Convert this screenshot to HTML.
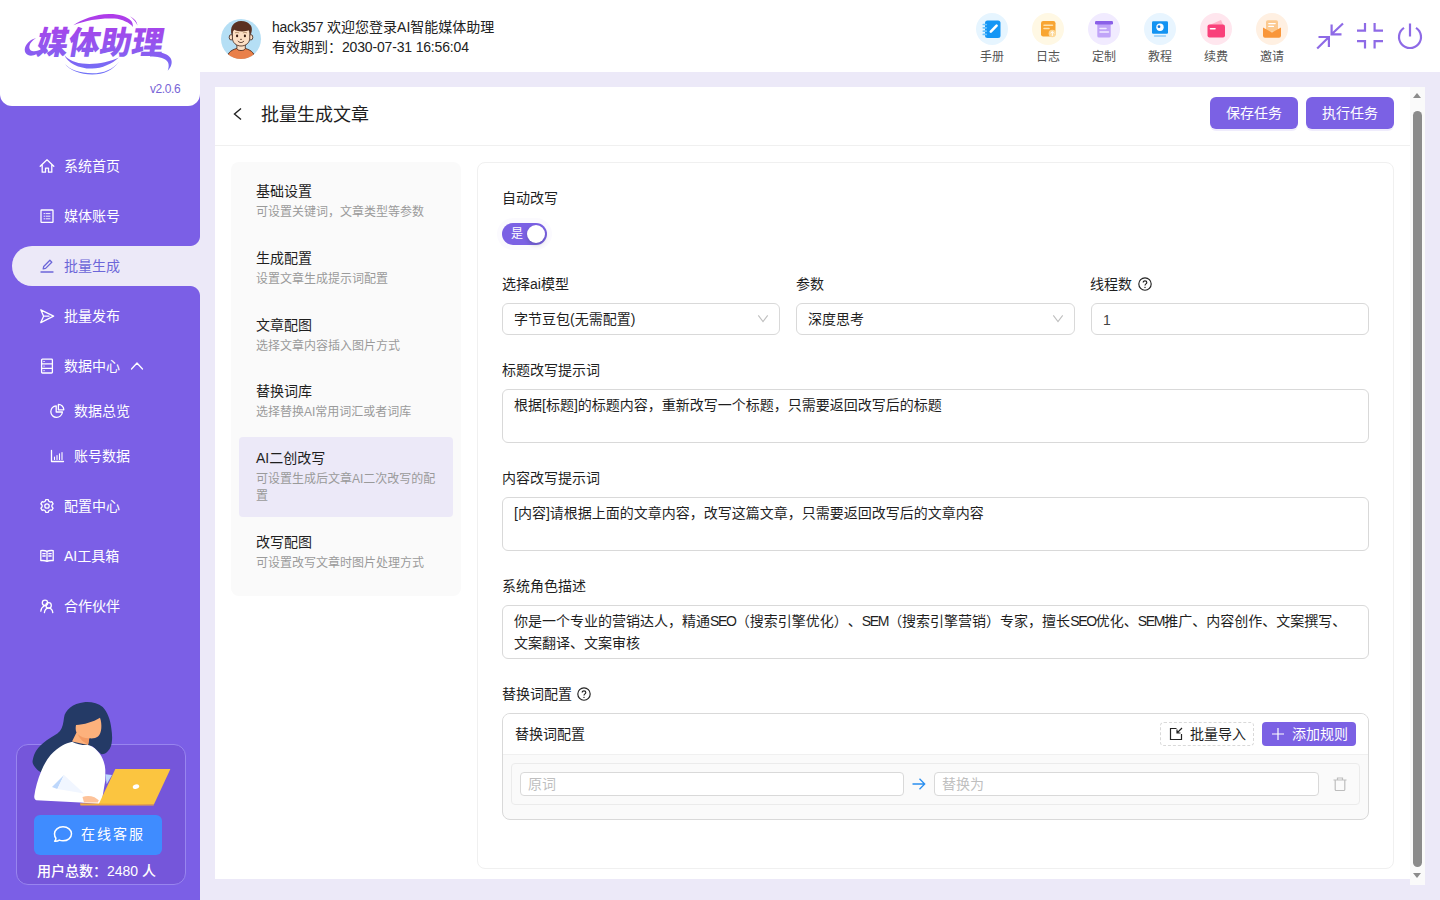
<!DOCTYPE html>
<html lang="zh-CN">
<head>
<meta charset="utf-8">
<title>批量生成文章</title>
<style>
*{box-sizing:border-box;margin:0;padding:0}
html,body{width:1440px;height:900px;overflow:hidden}
body{text-spacing-trim:space-all;font-family:"Liberation Sans","Noto Sans CJK SC",sans-serif;font-size:14px;color:#222;background:#ece9f8;position:relative}
.abs{position:absolute}
/* ---------- sidebar ---------- */
#side{position:absolute;left:0;top:0;width:200px;height:900px;background:#7b5fe6}
#logo{position:absolute;left:0;top:0;width:200px;height:106px;background:#fff;border-radius:0 0 12px 12px}
#ver{position:absolute;left:150px;top:82px;font-size:12px;letter-spacing:-.4px;color:#7763d6;line-height:14px}
.mi{position:absolute;left:0;width:200px;height:40px;color:#fff;font-size:14px;line-height:40px}
.mi svg{position:absolute;top:12px;width:16px;height:16px;fill:none;stroke:#fff;stroke-width:1.3;stroke-linecap:round;stroke-linejoin:round}
.mi span{position:absolute;top:0;white-space:nowrap}
.mi.l1 svg{left:39px}.mi.l1 span{left:64px}
.mi.l2 svg{left:49px;width:16px;height:16px;top:12px}.mi.l2 span{left:74px}
#act{position:absolute;left:12px;top:246px;width:188px;height:40px;background:#ece9f8;border-radius:20px 0 0 20px}
#act:before,#act:after{content:"";position:absolute;right:0;width:10px;height:10px}
#act:before{top:-10px;background:radial-gradient(circle at 0 0,#7b5fe6 9.5px,#ece9f8 10.5px)}
#act:after{bottom:-10px;background:radial-gradient(circle at 0 100%,#7b5fe6 9.5px,#ece9f8 10.5px)}
.mi.on{color:#6c66d9}.mi.on svg{stroke:#6c66d9}
#svc{position:absolute;left:16px;top:744px;width:170px;height:141px;background:#7556da;border:1px solid #9885ef;border-radius:12px}
#svcbtn{position:absolute;left:34px;top:815px;width:128px;height:40px;background:#3f8cff;border-radius:6px;color:#fff;font-size:14px;line-height:40px}
#svcbtn span{position:absolute;left:47px;top:-1px;letter-spacing:2px}
#users{position:absolute;left:12px;top:861px;width:169px;text-align:center;color:#fff;font-size:14px;font-weight:500;line-height:20px;white-space:nowrap}
/* ---------- header ---------- */
#hdr{position:absolute;left:200px;top:0;width:1240px;height:72px;background:#fff}
.hl{position:absolute;left:72px;font-size:14px;line-height:20px;color:#222;white-space:nowrap}
.ti{position:absolute;top:13px;width:56px;text-align:center}
.ti i{display:block;width:32px;height:32px;border-radius:50%;margin:0 auto}
.ti b{display:block;font-weight:400;font-size:12px;line-height:16px;color:#555;margin-top:4px}
/* ---------- card ---------- */
#card{position:absolute;left:215px;top:87px;width:1195px;height:792px;background:#fff}
#sb{position:absolute;left:1410px;top:87px;width:15px;height:798px;background:#fafafa}
#sb .th{position:absolute;left:3px;top:24px;width:9px;height:756px;border-radius:5px;background:#8b8b8b}
#sb .up{position:absolute;left:3px;top:6px;border:4.5px solid transparent;border-bottom:5px solid #8b8b8b;border-top:0}
#sb .dn{position:absolute;left:3px;top:786px;border:4.5px solid transparent;border-top:5px solid #8b8b8b;border-bottom:0}

/* ---------- card inner ---------- */
#ptitle{position:absolute;left:46px;top:15px;font-size:18px;line-height:26px;color:#1f1f1f;white-space:nowrap}
#phr{position:absolute;left:0;top:58px;width:1195px;height:1px;background:#f0f0f0}
.pbtn{position:absolute;top:10px;width:88px;height:32px;border-radius:6px;background:#7b61e4;color:#fff;font-size:14px;line-height:32px;text-align:center;box-shadow:0 2px 0 rgba(123,97,228,.12)}
#steps{position:absolute;left:16px;top:75px;width:230px;height:434px;background:#fafafa;border-radius:8px}
.st{position:absolute;left:8px;width:214px;border-radius:4px}
.st h4{position:absolute;left:17px;font-weight:400;font-size:14px;line-height:20px;color:#1f1f1f;white-space:nowrap}
.st p{position:absolute;left:17px;width:184px;font-size:12px;line-height:17px;color:#9a9a9a}
#form{position:absolute;left:262px;top:75px;width:917px;height:707px;border:1px solid #f0f0f0;border-radius:8px;background:#fff}
.lb{position:absolute;font-size:14px;line-height:20px;color:#1f1f1f;white-space:nowrap}
.ip{position:absolute;border:1px solid #d9d9d9;border-radius:6px;background:#fff;font-size:14px;line-height:20px;color:#1f1f1f;padding:5px 11px}
.ip u{text-decoration:none;letter-spacing:-1.3px}
.q{position:absolute;width:14px;height:14px}
#sw{position:absolute;left:24px;top:60px;width:45px;height:22px;border-radius:11px;background:#7b61e4;box-shadow:0 0 0 5px rgba(123,97,228,.03);color:#fff;font-size:12px;line-height:22px}
#sw span{position:absolute;left:9px;top:1px;line-height:21px}
#sw i{position:absolute;right:2px;top:2px;width:18px;height:18px;border-radius:50%;background:#fff;box-shadow:0 2px 4px rgba(0,35,11,.2)}
#rc{position:absolute;left:24px;top:550px;width:867px;height:107px;border:1px solid #d9d9d9;border-radius:8px;background:#fafafa;overflow:hidden}
#rch{position:absolute;left:0;top:0;width:865px;height:41px;background:#fff;border-bottom:1px solid #f0f0f0}
#rch b{position:absolute;left:12px;top:10px;font-weight:400;font-size:14px;line-height:20px;color:#1f1f1f}
.sbtn{position:absolute;top:8px;height:24px;border-radius:4px;font-size:14px;line-height:22px;white-space:nowrap}
#row{position:absolute;left:8px;top:49px;width:849px;height:42px;border:1px solid #ebebeb;border-radius:4px;background:#fafafa}
.si{position:absolute;top:8px;height:24px;border:1px solid #d9d9d9;border-radius:4px;background:#fff;font-size:14px;line-height:22px;color:#bfbfbf;padding:0 7px}
</style>
</head>
<body>
<div id="side">
  <div id="logo"><svg width="200" height="105" viewBox="0 0 200 105">
    <defs>
    <linearGradient id="lg2" x1="0" y1="14" x2="0" y2="74" gradientUnits="userSpaceOnUse"><stop offset="0" stop-color="#b13ae9"/><stop offset=".5" stop-color="#9455ee"/><stop offset="1" stop-color="#6f72f8"/></linearGradient>
    <linearGradient id="lg3" x1="0" y1="-39" x2="0" y2="21" gradientUnits="userSpaceOnUse"><stop offset="0" stop-color="#b13ae9"/><stop offset=".5" stop-color="#9455ee"/><stop offset="1" stop-color="#6f72f8"/></linearGradient></defs>
    <g fill="url(#lg2)">
      <path d="M73.300 25.200C82 19.500 95 14.500 108.900 14.100c9.100-.2 18.100 2.400 22.200 6.700 1.400 1.700 1.900 3.700 1.700 6.100-2.800-3.900-10.800-7.700-18.400-8.300-11.400-.8-26.400.9-41.100 6.600z"/>
      <path d="M130 16.300c4.500 2.300 7 5.500 7.500 9.200-1.500-3.500-4-6.300-7.500-9.200z"/>
      <path d="M64.400 54.700C66 58 72 62 82.200 63.600c12.800 1.400 25.800-1.100 36.700-6.100-6.900 6.500-16.900 10.800-26.700 11.100C80 69 67 63 64.400 54.700z"/>
      <path d="M65 64.100c5 5.900 15 8.900 27.200 9.200 11.800 0 20.800-4.300 26.700-11.400-5.900 8.100-14.900 12.400-26.700 12.600-12.200 0-22.700-4-27.200-10.400z"/>
      <path d="M42 48.500c-4 6-10 8.500-14 6.500-4.500-2.200-4.200-8 .2-12.500 2.500-2.500 5.300-3.900 7.800-4.200-3.500 2-5.800 4.500-6.500 7.500-.7 3 .8 5.300 3.800 5.500 3 .2 6.200-1 8.700-2.800z"/>
      <path d="M150 52.500c9-1.200 17.500.5 20.500 5.500 2.500 4.200.8 9-2.800 12.800 1.500-4 1.500-7.800-1.200-10.300-3-2.800-9-4-16.500-4z"/>
    </g>
    <text transform="translate(35 54) skewX(-10)" font-family="'Liberation Sans','Noto Sans CJK SC',sans-serif" font-weight="900" font-size="32" textLength="127" lengthAdjust="spacingAndGlyphs" fill="url(#lg3)">媒体助理</text>
  </svg></div>
  <div id="ver">v2.0.6</div>
  <div id="act"></div>

  <div class="mi l1" style="top:146px"><svg viewBox="0 0 16 16"><path d="M1.200 8.300 8 1.800l6.800 6.500M3.200 6.800v7.400h3.300v-4h3v4h3.300V6.800"/></svg><span>系统首页</span></div>
  <div class="mi l1" style="top:196px"><svg viewBox="0 0 16 16"><rect x="2" y="2" width="12" height="12.400" rx=".6"/><path stroke-width=".9" d="M5 5.600h.8M7.200 5.600h3.800M5 8.200h.8M7.200 8.200h3.800M5 10.800h.8M7.200 10.800h3.800"/></svg><span>媒体账号</span></div>
  <div class="mi l1 on" style="top:246px"><svg viewBox="0 0 16 16"><path d="M2 14h12M4.2 10.9l.5-2.4 6.2-6.2 1.9 1.9-6.2 6.2z"/></svg><span>批量生成</span></div>
  <div class="mi l1" style="top:296px"><svg viewBox="0 0 16 16"><path d="M1.800 1.800 14.600 8.200 1.800 14.600 4.600 8.200zM4.600 8.200h5.400"/></svg><span>批量发布</span></div>
  <div class="mi l1" style="top:346px"><svg viewBox="0 0 16 16"><rect x="2.600" y="1.200" width="10.800" height="13.800" rx=".8"/><path d="M2.600 5.800h10.800M2.600 10.400h10.800"/><path stroke-width="1" d="M4.800 3.500h.5M4.800 8.100h.5M4.800 12.700h.5"/></svg><span>数据中心</span><svg viewBox="0 0 16 16" style="left:129px;top:12px"><path d="M2.5 11 8 5l5.500 6"/></svg></div>
  <div class="mi l2" style="top:391px"><svg viewBox="0 0 16 16"><path d="M7.200 2.800A5.800 5.800 0 1 0 13.400 9H7.200z"/><path d="M9.400 1.400v5.400h5.400A5.400 5.400 0 0 0 9.400 1.400z"/></svg><span>数据总览</span></div>
  <div class="mi l2" style="top:436px"><svg viewBox="0 0 16 16"><path d="M2.500 2.500v11h12"/><path stroke-width="1.100" d="M5.500 11.500V9M8 11.500V7.500M10.500 11.500V5.800M13 11.500V4.500"/></svg><span>账号数据</span></div>
  <div class="mi l1" style="top:486px"><svg viewBox="0 0 16 16"><circle cx="8" cy="8" r="2.200"/><path d="M6.700 1.600h2.600l.5 1.700 1.300.75 1.700-.4 1.300 2.250-1.200 1.300v1.600l1.200 1.300-1.300 2.250-1.700-.4-1.300.75-.5 1.700H6.700l-.5-1.700-1.300-.75-1.700.4-1.300-2.250 1.200-1.300V7.200L1.900 5.900l1.300-2.250 1.700.4 1.300-.75z"/></svg><span>配置中心</span></div>
  <div class="mi l1" style="top:536px"><svg viewBox="0 0 16 16"><path d="M8 3.400v10M8 3.400c-1.600-.9-3.900-1-6.200-.8v10c2.300-.2 4.600-.1 6.200.8 1.600-.9 3.900-1 6.200-.8v-10c-2.300-.2-4.600-.1-6.200.8zM3.800 5.600h2.400M3.800 8h2.400M9.800 5.600h2.400M9.800 8h2.400"/></svg><span>AI工具箱</span></div>
  <div class="mi l1" style="top:586px"><svg viewBox="0 0 16 16"><circle cx="6" cy="4.800" r="2.700"/><circle cx="9.600" cy="7.400" r="2.700"/><path d="M1.800 13.200c.2-2.600 1.500-4.400 3.400-5.200M5.400 14.600c.4-2.800 2-4.500 4.200-4.500s3.800 1.700 4.200 4.500"/></svg><span>合作伙伴</span></div>

  <div id="svc"></div>
<svg class="abs" style="left:26px;top:698px" width="150" height="112" viewBox="26 698 150 112">
    <path d="M84 702.300C91 701.500 98 703.500 102.700 707c4.800 5 7.800 13 8.600 21.300.7 4.700 1 8.700.7 12-.3 4.700-1.500 8.200-4 10.700-2 2.300-4.500 3.600-6.700 3.300L92 746l-45 28c-5-1-8-2.500-9.700-4.300-3.800-3.700-5.300-6.700-4.600-9.400.8-4.300 1.800-6.800 3.300-9.300 2.500-4 6.500-7.500 10.700-10.700 5.300-3.800 10.300-5.800 13.300-9.300 2.500-3.500 3.500-8.500 4-13.300 1-7.700 9-14.200 20-15.400z" fill="#243a66"/>
    <path d="M76 725c8-.5 17-3 24-7.300 1.200 3.300 1.600 7 1.300 10.600-.3 3.500-1.300 6.500-3.300 8.200-2 1.600-5 2.100-8.700 1.800L88 745l-16-3.500 4.500-9c-1-2.200-1-4.800-.5-7.500z" fill="#fdb17c"/>
    <path d="M77.500 734c3 3 7.500 4.500 11.800 4.300l-1.100 6.200c-4.500-2-8.500-5.500-10.700-10.500z" fill="#f39a63"/>
    <path d="M72 741.700c5 2.500 10.500 3.600 16 3.300 2.500.6 4.800 1.700 6.700 3.300 3.500 3 6.300 6.700 8 10.700 1.500 3.500 2.400 7 2.600 10.700l0 10.600-4 24-21 -1.700-44-2.300c-1.500-.6-2.300-2.300-2-4.300 1-8 3.500-16.500 7-25 2.500-6 5.500-11.500 9.300-16 3.500-4 7.500-7 11.700-9.500 3-1.700 6.500-3 10-3.800z" fill="#fff"/>
    <path d="M52 787l12-12-6.700 14z" fill="#bdd7fb"/>
    <path d="M64 775l20 18.500-26.500-4.500z" fill="#f1f6ff"/>
    <path d="M105.300 774.300l6.700.7-5.300 9.300z" fill="#bdd7fb"/>
    <path d="M82.500 797c3.500-1.500 8-1.500 12 .2l4.300 3-1 2.300H84z" fill="#fdc39a"/>
    <path d="M115.300 769h55.100L154 804.300H98.700z" fill="#fbc540"/>
    <path d="M80 803.300l74 1-.4 1.200H80.500z" fill="#f0a93c"/>
    <ellipse cx="136" cy="786.700" rx="3.300" ry="2.200" fill="#fff" transform="rotate(-15 136 786.700)"/>
  </svg>
  <div id="svcbtn"><svg class="abs" style="left:18px;top:10px" width="21" height="19" viewBox="0 0 21 19" fill="none" stroke="#fff" stroke-width="1.500" stroke-linecap="round" stroke-linejoin="round"><path d="M11 1.800c4.800 0 8.500 3 8.500 7s-3.700 7-8.500 7c-1.300 0-2.600-.2-3.700-.7-1.200.9-2.900 1.300-4.700 1.100.9-.8 1.300-1.800 1.300-2.900C2.800 12 2.500 10.500 2.500 8.800c0-4 3.700-7 8.500-7z"/></svg><span>在线客服</span></div>
  <div id="users">用户总数：2480 人</div>
</div>
<div id="hdr">

  <svg class="abs" style="left:21px;top:19px" width="40" height="40" viewBox="0 0 40 40">
    <defs><clipPath id="avc"><circle cx="20" cy="20" r="20"/></clipPath></defs>
    <circle cx="20" cy="20" r="20" fill="#b5dff5"/>
    <g clip-path="url(#avc)" stroke="#3b1f14" stroke-width=".8" stroke-linejoin="round">
      <path d="M6 41c0-6.500 3-9.500 9.500-11.500h9C31 31.500 34 34.500 34 41z" fill="#e9804a"/>
      <path d="M15.900 25.500h8.400v4.300c-1.200 2.300-7.200 2.300-8.400 0z" fill="#fcdfc4"/>
      <ellipse cx="10.100" cy="18.300" rx="1.900" ry="2.700" fill="#fcdfc4"/>
      <ellipse cx="29.900" cy="18.300" rx="1.900" ry="2.700" fill="#fcdfc4"/>
      <path d="M11.400 14c0-5 3.600-7.500 8.700-7.500s8.700 2.500 8.700 7.500v5c0 4.800-4 8-8.700 8s-8.700-3.200-8.700-8z" fill="#fcdfc4"/>
      <path d="M10.800 16.300C8.300 8.500 12.500 2 20 2c4.500 0 7.300 1.300 8.500 3.200 2.800 1.800 3.200 6.300 1 11.100-.3-2.200-.9-3.800-1.800-5-3.500 1.600-10.700 1.500-14.500-.5-1.300 1.300-2 3.200-2.400 5.500z" fill="#5a3122" stroke="none"/>
      <ellipse cx="16.100" cy="16.900" rx="1.100" ry="1.300" fill="#3b1f14" stroke="none"/><ellipse cx="23.900" cy="16.900" rx="1.100" ry="1.300" fill="#3b1f14" stroke="none"/>
      <path d="M14.300 13.800c1.100-.6 2.500-.6 3.500 0M22.200 13.800c1-.6 2.400-.6 3.500 0" stroke="#b9936f" stroke-width="1" fill="none" stroke-linecap="round"/>
      <path d="M17.100 22.200c1.700 1.900 4 1.900 5.700 0" fill="none" stroke-linecap="round" stroke-width=".9"/>
      <path d="M19.300 20.300c.4.400 1 .4 1.400 0" fill="none" stroke-linecap="round" stroke-width=".8"/>
    </g>
  </svg>
  <div class="hl" style="top:17px"><span style="letter-spacing:-.25px">hack357</span> 欢迎您登录AI智能媒体助理</div>
  <div class="hl" style="top:37px">有效期到：<span style="letter-spacing:-.17px">2030-07-31 16:56:04</span></div>

  <div class="ti" style="left:764px"><i style="background:#e6f5ff"><svg width="32" height="32" viewBox="0 0 32 32"><rect x="9" y="7.500" width="15.500" height="17.500" rx="2.500" fill="#1496f5"/><path d="M7.300 11.500h3M7.300 14.800h3M7.300 18.100h3M7.300 21.400h3" stroke="#6cc3fc" stroke-width="1.700" stroke-linecap="round"/><path d="M14.800 18.600l5.800-6" stroke="#fff" stroke-width="2.600" stroke-linecap="round"/></svg></i><b>手册</b></div>
  <div class="ti" style="left:820px"><i style="background:#fff8e4"><svg width="32" height="32" viewBox="0 0 32 32"><rect x="9" y="8" width="14.500" height="15.500" rx="2.200" fill="#f8a532"/><path d="M12 12.200h8.500M12 15.600h5" stroke="#fde2ae" stroke-width="1.500" stroke-linecap="round"/><circle cx="20.300" cy="20.500" r="3.700" fill="#fdd898"/><path d="M20.300 22.500v-3.600M18.800 20.100l1.500-1.500 1.500 1.500" stroke="#fff" stroke-width="1" fill="none" stroke-linecap="round" stroke-linejoin="round"/></svg></i><b>日志</b></div>
  <div class="ti" style="left:876px"><i style="background:#f1ebff"><svg width="32" height="32" viewBox="0 0 32 32"><rect x="9.300" y="10" width="13.400" height="14.500" rx="1.600" fill="#c0a4f8"/><rect x="7" y="8" width="18" height="3.400" rx="1.200" fill="#8a60e8"/><path d="M12 15.600h6M12 19h8.500" stroke="#f1ebff" stroke-width="1.500" stroke-linecap="round"/></svg></i><b>定制</b></div>
  <div class="ti" style="left:932px"><i style="background:#e8f5ff"><svg width="32" height="32" viewBox="0 0 32 32"><rect x="8" y="8.200" width="16" height="12.500" rx="1.200" fill="#1393f2"/><circle cx="16" cy="14.300" r="3.700" fill="#fff"/><circle cx="15" cy="13.700" r="1.400" fill="#1878d8"/><path d="M10.500 23h11" stroke="#8fcaf8" stroke-width="1.300" stroke-linecap="round"/></svg></i><b>教程</b></div>
  <div class="ti" style="left:988px"><i style="background:#ffe6ee"><svg width="32" height="32" viewBox="0 0 32 32"><path d="M9.500 12l11.500-5 2.200 5z" fill="#ffb3c8"/><rect x="7.500" y="11.500" width="17.500" height="13" rx="2" fill="#f9407a"/><path d="M10.500 15.800h4.500" stroke="#fff" stroke-width="1.600" stroke-linecap="round"/></svg></i><b>续费</b></div>
  <div class="ti" style="left:1044px"><i style="background:#fff0e2"><svg width="32" height="32" viewBox="0 0 32 32"><rect x="10" y="7.300" width="12" height="11.500" rx="1.800" fill="#fcc98f"/><path d="M12.800 10.600h6.400M12.800 13.400h4.600" stroke="#fff" stroke-width="1.300" stroke-linecap="round"/><path d="M7 14.500l9 5 9-5v8.300a2 2 0 0 1-2 2H9a2 2 0 0 1-2-2z" fill="#f9963a"/></svg></i><b>邀请</b></div>

  <svg class="abs" style="left:1116px;top:22px" width="28" height="28" viewBox="0 0 28 28" fill="none" stroke="#8e6ae6" stroke-width="2.200"><path d="M27 1.500 15.600 12.300M15.600 2.500v9.800h9.900M1.200 26.500 12.900 15M2.500 15h10.400v10"/></svg>
  <svg class="abs" style="left:1156px;top:22px" width="28" height="28" viewBox="0 0 28 28" fill="none" stroke="#8e6ae6" stroke-width="2.200"><path d="M1 8.700h8V1M27 8.700h-8.400V1M1 19.200h8v7.300M27 19.200h-8.400v7.300"/></svg>
  <svg class="abs" style="left:1196px;top:22px" width="28" height="28" viewBox="0 0 28 28" fill="none" stroke="#8e6ae6" stroke-width="2.200"><path d="M14 1.500v13M8 5.800a11 11 0 1 0 12 0"/></svg>

</div>
<div id="card">

  <svg class="abs" style="left:17px;top:20px" width="12" height="14" viewBox="0 0 12 14" fill="none" stroke="#222" stroke-width="1.400"><path d="M9 1.500 2.500 7 9 12.500"/></svg>
  <div id="ptitle">批量生成文章</div>
  <div class="pbtn" style="left:995px">保存任务</div>
  <div class="pbtn" style="left:1091px">执行任务</div>
  <div id="phr"></div>

  <div id="steps">
    <div class="st" style="top:8px;height:59px"><h4 style="top:11px">基础设置</h4><p style="top:34px">可设置关键词，文章类型等参数</p></div>
    <div class="st" style="top:75px;height:59px"><h4 style="top:11px">生成配置</h4><p style="top:34px">设置文章生成提示词配置</p></div>
    <div class="st" style="top:142px;height:59px"><h4 style="top:11px">文章配图</h4><p style="top:34px">选择文章内容插入图片方式</p></div>
    <div class="st" style="top:208px;height:59px"><h4 style="top:11px">替换词库</h4><p style="top:34px">选择替换AI常用词汇或者词库</p></div>
    <div class="st" style="top:275px;height:80px;background:#ece9f8"><h4 style="top:11px">AI二创改写</h4><p style="top:34px">可设置生成后文章AI二次改写的配置</p></div>
    <div class="st" style="top:359px;height:59px"><h4 style="top:11px">改写配图</h4><p style="top:34px">可设置改写文章时图片处理方式</p></div>
  </div>

  <div id="form">
    <div class="lb" style="left:24px;top:25px">自动改写</div>
    <div id="sw"><span>是</span><i></i></div>

    <div class="lb" style="left:24px;top:111px">选择ai模型</div>
    <div class="lb" style="left:318px;top:111px">参数</div>
    <div class="lb" style="left:612px;top:111px">线程数</div>
    <svg class="q" style="left:660px;top:114px" viewBox="0 0 14 14" fill="none" stroke="#222" stroke-width="1.150"><circle cx="7" cy="7" r="6.200"/><path d="M5.200 5.600c0-1.100.8-1.800 1.800-1.800s1.800.7 1.800 1.700c0 1.300-1.800 1.400-1.800 2.900"/><circle cx="7" cy="10.300" r=".4" fill="#222" stroke-width=".6"/></svg>
    <div class="ip" style="left:24px;top:140px;width:278px;height:32px">字节豆包(无需配置)<svg class="abs" style="right:10px;top:8px" width="12" height="12" viewBox="0 0 12 12" fill="none" stroke="#bfbfbf" stroke-width="1.100"><path d="M1.300 3.300 6 9.600l4.700-6.300"/></svg></div>
    <div class="ip" style="left:318px;top:140px;width:279px;height:32px">深度思考<svg class="abs" style="right:10px;top:8px" width="12" height="12" viewBox="0 0 12 12" fill="none" stroke="#bfbfbf" stroke-width="1.100"><path d="M1.300 3.300 6 9.600l4.700-6.300"/></svg></div>
    <div class="ip" style="left:613px;top:140px;width:278px;height:32px;padding-top:6px;color:#444">1</div>

    <div class="lb" style="left:24px;top:197px">标题改写提示词</div>
    <div class="ip" style="left:24px;top:226px;width:867px;height:54px">根据[标题]的标题内容，重新改写一个标题，只需要返回改写后的标题</div>

    <div class="lb" style="left:24px;top:305px">内容改写提示词</div>
    <div class="ip" style="left:24px;top:334px;width:867px;height:54px">[内容]请根据上面的文章内容，改写这篇文章，只需要返回改写后的文章内容</div>

    <div class="lb" style="left:24px;top:413px">系统角色描述</div>
    <div class="ip" style="left:24px;top:442px;width:867px;height:54px;line-height:22px;padding-top:4px;white-space:nowrap"><span id="l1">你是一个专业的营销达人，精通<u>SEO</u>（搜索引擎优化）、<u>SEM</u>（搜索引擎营销）专家，擅长<u>SEO</u>优化、<u>SEM</u>推广、内容创作、文案撰写、</span><br>文案翻译、文案审核</div>

    <div class="lb" style="left:24px;top:521px">替换词配置</div>
    <svg class="q" style="left:99px;top:524px" viewBox="0 0 14 14" fill="none" stroke="#222" stroke-width="1.150"><circle cx="7" cy="7" r="6.200"/><path d="M5.200 5.600c0-1.100.8-1.800 1.800-1.800s1.800.7 1.800 1.700c0 1.300-1.800 1.400-1.800 2.900"/><circle cx="7" cy="10.300" r=".4" fill="#222" stroke-width=".6"/></svg>
    <div id="rc">
      <div id="rch"><b>替换词配置</b>
        <div class="sbtn" style="left:657px;width:94px;border:1px dashed #d9d9d9;color:#1f1f1f;background:#fff"><svg class="abs" style="left:8px;top:4px" width="14" height="14" viewBox="0 0 14 14" fill="none" stroke="#222" stroke-width="1.200"><path d="M7.500 1.500H1.500v11h11V7M13 1 8 6M8 2.500V6h3.500"/></svg><span class="abs" style="left:29px;top:0">批量导入</span></div>
        <div class="sbtn" style="left:759px;width:94px;background:#7b61e4;color:#fff;line-height:24px"><svg class="abs" style="left:9px;top:5px" width="14" height="14" viewBox="0 0 14 14" fill="none" stroke="#fff" stroke-width="1.200"><path d="M7 1v12M1 7h12"/></svg><span class="abs" style="left:30px;top:0">添加规则</span></div>
      </div>
      <div id="row">
        <div class="si" style="left:8px;width:384px">原词</div>
        <svg class="abs" style="left:400px;top:14px" width="14" height="12" viewBox="0 0 14 12" fill="none" stroke="#2a8ff0" stroke-width="1.300"><path d="M.5 6h12M7.500 .8 12.700 6 7.500 11.200"/></svg>
        <div class="si" style="left:422px;width:385px">替换为</div>
        <svg class="abs" style="left:820px;top:12px" width="16" height="16" viewBox="0 0 16 16" fill="none" stroke="#bdbdbd" stroke-width="1.200"><path d="M1.500 4h13M5.500 4V2h5v2M3.200 4v9.500a1 1 0 0 0 1 1h7.600a1 1 0 0 0 1-1V4"/></svg>
      </div>
    </div>
  </div>

</div>
<div id="sb"><div class="up"></div><div class="th"></div><div class="dn"></div></div>
</body>
</html>
